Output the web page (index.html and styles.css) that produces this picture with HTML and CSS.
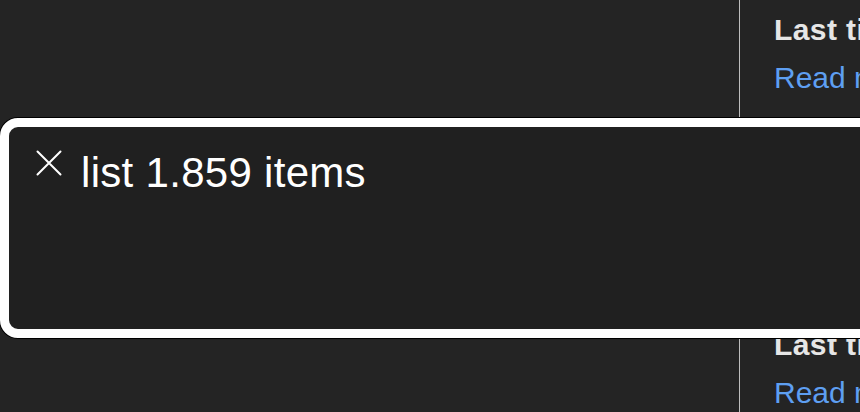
FILE: index.html
```html
<!DOCTYPE html>
<html lang="en">
<head>
<meta charset="utf-8">
<title>Overlay</title>
<link rel="stylesheet" href="styles.css">
</head>
<body>
<div class="page">
  <div class="main"></div>
  <aside class="side">
    <div class="block">
      <div class="title">Last time</div>
      <div class="link">Read more</div>
    </div>
    <div class="block">
      <div class="title">Last time</div>
      <div class="link">Read more</div>
    </div>
  </aside>
</div>
<div class="toast">
  <div class="toast-row">
    <svg class="close" width="26" height="26" viewBox="0 0 26 26" aria-hidden="true">
      <path d="M1.5 1.5 L24.5 24.5 M24.5 1.5 L1.5 24.5" stroke="#ffffff" stroke-width="2" stroke-linecap="round" fill="none"/>
    </svg>
    <div class="message">list 1.859 items</div>
  </div>
</div>
</body>
</html>
```

FILE: styles.css
```css
html, body {
  margin: 0;
  padding: 0;
  background: #242424;
  overflow: hidden;
  width: 860px;
  height: 412px;
}

.page {
  display: flex;
  height: 412px;
  font-family: "Liberation Sans", Arial, sans-serif;
}

.main {
  width: 739px;
  border-right: 1px solid #bdbdbd;
  flex-shrink: 0;
}

.side {
  padding-left: 34px;
  padding-top: 6px;
  white-space: nowrap;
  overflow: hidden;
  flex: 1;
}

.block {
  height: 315px;
}

.title {
  font-size: 30px;
  line-height: 48px;
  font-weight: bold;
  color: #e6e6e6;
  letter-spacing: 0.4px;
}

.link {
  font-size: 30px;
  line-height: 48px;
  color: #5e9ff2;
}

.toast {
  position: absolute;
  top: 118px;
  left: 0;
  width: 900px;
  height: 220px;
  box-sizing: border-box;
  border: 9px solid #ffffff;
  border-radius: 18px;
  box-shadow: 0 0 0 1px #000000;
  background: #202020;
  padding: 21px 0 0 27px;
  font-family: "Liberation Sans", Arial, sans-serif;
}

.toast-row {
  display: flex;
  align-items: flex-start;
  gap: 19px;
}

.close {
  margin-top: 2px;
  flex-shrink: 0;
}

.message {
  font-size: 42px;
  line-height: 50px;
  color: #ffffff;
  white-space: nowrap;
  letter-spacing: 0.3px;
}
```
